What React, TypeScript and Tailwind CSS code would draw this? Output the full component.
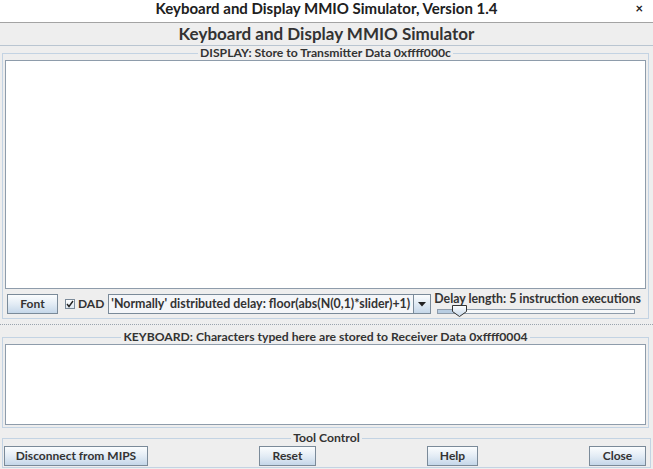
import React from "react";

const font = { fontFamily: "Lato, 'DejaVu Sans', sans-serif" };

function Btn({ children, className = "" }: { children: React.ReactNode; className?: string }) {
  return (
    <div
      className={
        "h-[20px] flex items-center justify-center border border-[#7a8a99] bg-gradient-to-b from-[#fbfdfe] via-[#e3ecf5] to-[#c5d7e9] text-[12px] font-bold text-[#333333] " +
        className
      }
    >
      {children}
    </div>
  );
}

function Legend({ children }: { children: React.ReactNode }) {
  return (
    <legend className="mx-auto px-[2px] text-[12.2px] leading-[12px] font-bold text-[#333333] whitespace-nowrap">{children}</legend>
  );
}

export default function App() {
  return (
    <div className="w-[653px] h-[469px] overflow-hidden flex flex-col bg-[#eeeeee]" style={font}>
      {/* Title bar */}
      <div className="relative h-[23px] shrink-0 bg-white border-b border-[#a3a3a3] flex items-start justify-center">
        <span className="mt-[1px] text-[15px] font-bold text-[#202020] leading-[14px]">
          Keyboard and Display MMIO Simulator, Version 1.4
        </span>
        <span className="absolute right-[10px] top-[1px] h-[14px] leading-[14px] text-[13px] font-bold text-[#202020]">×</span>
      </div>

      {/* Heading */}
      <div className="h-[23px] shrink-0 border-b border-[#b9c5d1] flex items-center justify-center">
        <span className="text-[17px] font-bold text-[#333333] leading-none -mt-[1px]">Keyboard and Display MMIO Simulator</span>
      </div>

      {/* Display panel */}
      <fieldset className="mt-[1px] ml-[2px] mr-[4px] border border-[#c3d3e3] px-[1px] pb-[2px] shrink-0">
        <Legend>DISPLAY: Store to Transmitter Data 0xffff000c</Legend>
        <div className="mt-[1px] h-[229px] mx-[1px] border border-[#8e9cab] bg-white" />
        <div className="mt-[4px] h-[23px] flex items-start">
          <Btn className="ml-[3px] mt-[1px] w-[51px]">Font</Btn>
          <div className="ml-[7px] mt-[5px] flex items-center">
            <div className="w-[10px] h-[10px] border border-[#7a8a99] bg-gradient-to-b from-white to-[#dfe8f1] flex items-center justify-center">
              <svg width="8" height="8" viewBox="0 0 8 8">
                <path d="M1 4 L3 6.5 L7 1" stroke="#222" strokeWidth="1.4" fill="none" />
              </svg>
            </div>
            <span className="ml-[3px] text-[12px] font-bold text-[#333333] leading-none">DAD</span>
          </div>
          <div className="ml-[4px] mt-[1px] w-[323px] h-[20px] flex border border-[#7a8a99] bg-[#f4f6f9]">
            <div className="flex-1 flex items-center pl-[2px] text-[12.4px] font-bold text-[#333333] whitespace-nowrap overflow-hidden">
              'Normally' distributed delay: floor(abs(N(0,1)*slider)+1)
            </div>
            <div className="w-[17px] border-l border-[#7a8a99] bg-gradient-to-b from-[#fbfdfe] to-[#c5d7e9] flex items-center justify-center">
              <svg width="8" height="5" viewBox="0 0 8 5">
                <path d="M0 0 L8 0 L4 4.5 Z" fill="#222" />
              </svg>
            </div>
          </div>
          <div className="ml-[3px] flex flex-col">
            <span className="text-[12.3px] font-bold text-[#333333] leading-none whitespace-nowrap">
              Delay length: 5 instruction executions
            </span>
            <div className="relative mt-[0px] ml-[3px] h-[12px] w-[198px]">
              <div className="absolute left-0 right-0 top-[4px] h-[5px] border border-[#8e9cab] bg-[#f6f8fa]" />
              <div className="absolute left-[1px] top-[5px] h-[3px] w-[18px] bg-[#b8cde2]" />
              <svg className="absolute left-[15px] top-[0px]" width="15" height="12" viewBox="0 0 15 12">
                <defs>
                  <linearGradient id="tg" x1="0" y1="0" x2="0" y2="1">
                    <stop offset="0" stopColor="#ffffff" />
                    <stop offset="1" stopColor="#c5d7e9" />
                  </linearGradient>
                </defs>
                <path d="M0.5 0.5 H14.5 V6.5 L7.5 11.5 L0.5 6.5 Z" fill="url(#tg)" stroke="#333" strokeWidth="1" />
              </svg>
            </div>
          </div>
        </div>
      </fieldset>

      {/* Splitter */}
      <div className="h-[12px] shrink-0 flex flex-col justify-center">
        <div className="h-[2px] border-t border-dotted border-[#9aa4ae]" />
      </div>

      {/* Keyboard panel */}
      <fieldset className="ml-[2px] mr-[4px] border border-[#c3d3e3] px-[1px] pb-[2px] shrink-0">
        <Legend>KEYBOARD: Characters typed here are stored to Receiver Data 0xffff0004</Legend>
        <div className="mt-[1px] h-[81px] mx-[1px] border border-[#8e9cab] bg-white" />
      </fieldset>

      {/* Tool control */}
      <fieldset className="mt-[4px] ml-[2px] mr-[2px] border border-[#c3d3e3] pb-[1px] shrink-0">
        <Legend>Tool Control</Legend>
        <div className="mt-[2px] flex justify-between pl-[1px] pr-[4px]">
          <Btn className="w-[144px]">Disconnect from MIPS</Btn>
          <Btn className="w-[57px]">Reset</Btn>
          <Btn className="w-[51px]">Help</Btn>
          <Btn className="w-[57px]">Close</Btn>
        </div>
      </fieldset>
    </div>
  );
}
